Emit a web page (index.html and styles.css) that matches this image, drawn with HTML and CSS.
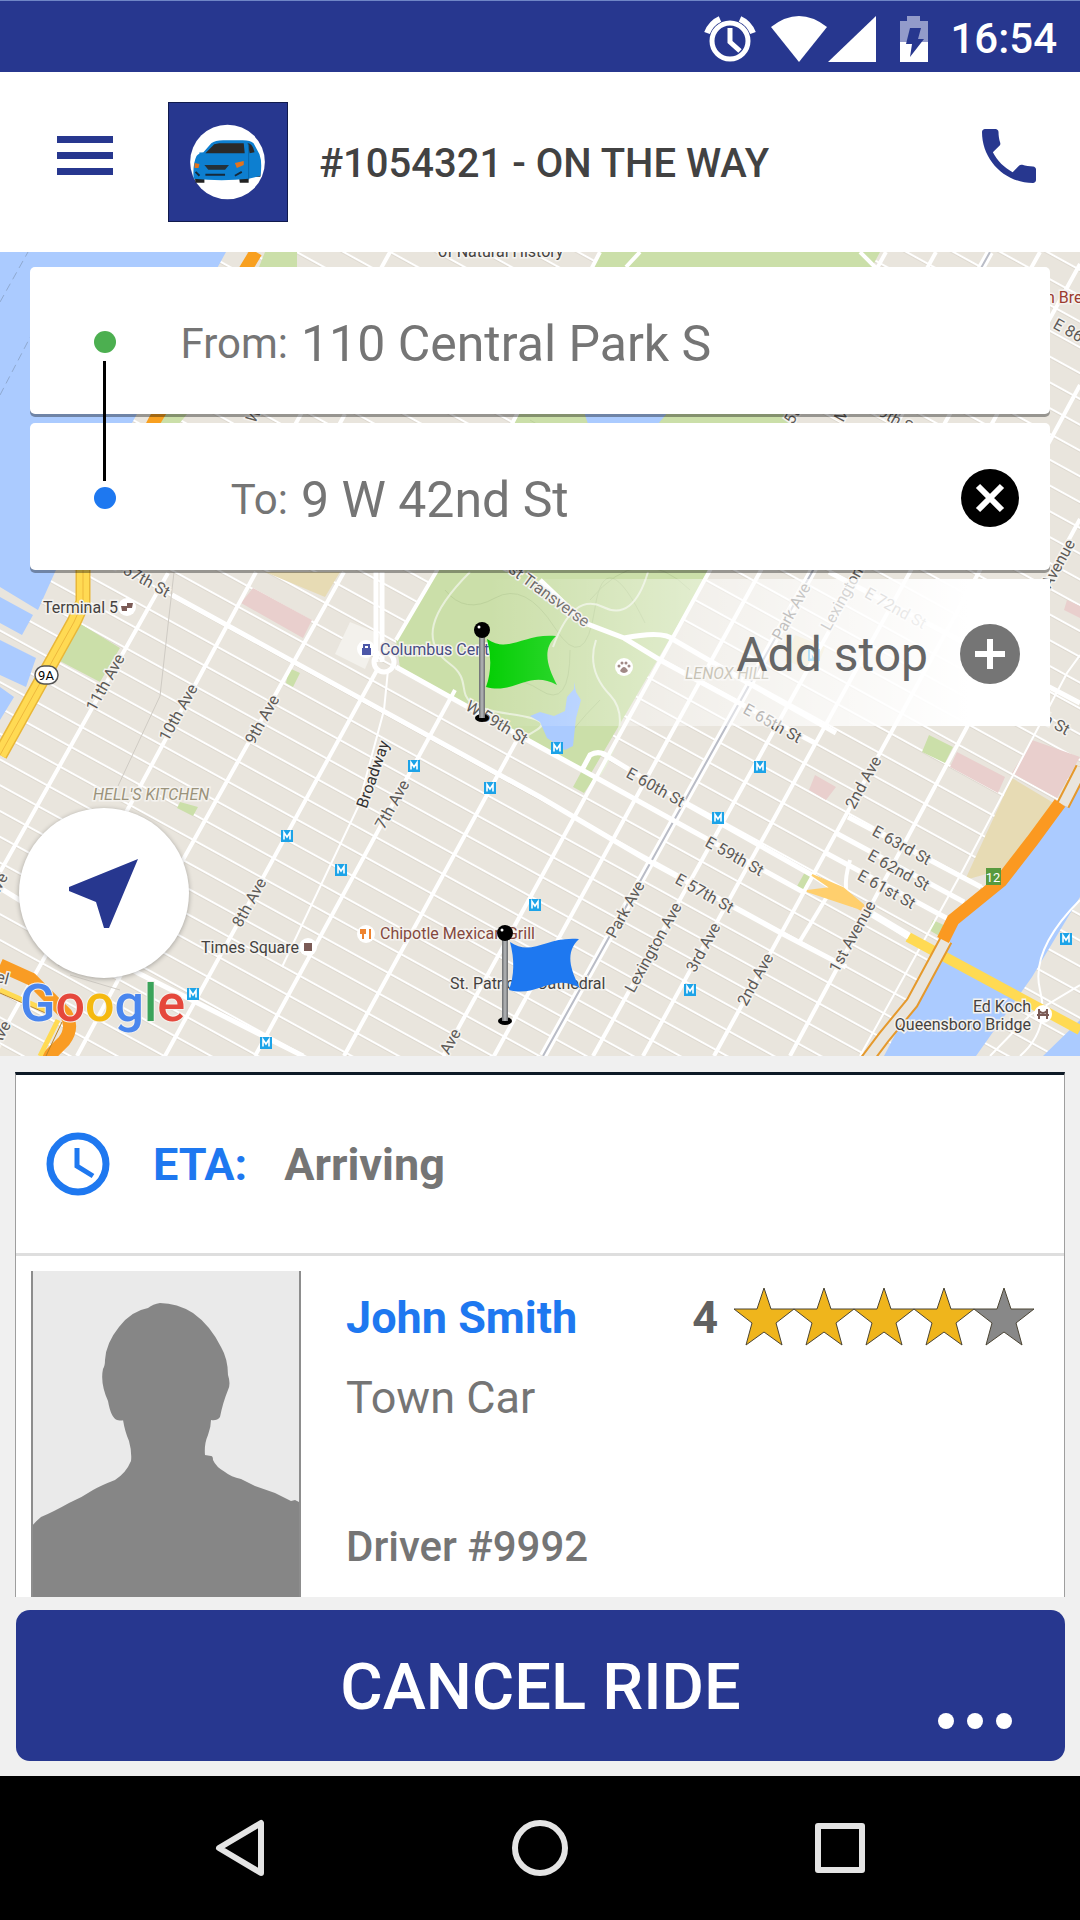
FILE: index.html
```html
<!DOCTYPE html>
<html lang="en">

<head>
    <meta charset="utf-8">
    <title>On the way</title>
    <meta name="viewport" content="width=device-width">
    <link rel="stylesheet" href="styles.css">
</head>

<body>
    <div class="status-bar">
        <svg class="status-alarm" width="52" height="46" viewBox="0 0 52 46" fill="none" stroke="#fff">
            <circle cx="26" cy="25" r="18" stroke-width="5" />
            <path d="M26 12v14l10 9" stroke-width="5" />
            <path d="M3 17Q7 7 16 3M49 17Q45 7 36 3" stroke-width="6" />
        </svg>
        <svg width="58" height="46" viewBox="0 0 58 46" fill="#fff">
            <path d="M29 46L1 11Q29-11 57 11z" />
        </svg>
        <svg width="48" height="46" viewBox="0 0 48 46" fill="#fff">
            <path d="M48 0v46H0z" />
        </svg>
        <svg class="status-battery" width="28" height="46" viewBox="0 0 28 46">
            <path d="M0 5h7V0h13v5h8v21H0z" fill="#939bca" />
            <path d="M0 26h28v20H0z" fill="#fff" />
            <path d="M10 12h11l-3 11h6L10 41l2-13H6z" fill="#27378f" />
        </svg>
        <span>16:54</span>
    </div>

    <header class="header">
        <button class="icon-button menu-button" aria-label="Menu">
            <svg width="56" height="40" viewBox="0 0 56 40" fill="#27378f">
                <path d="M0 0h56v7H0zM0 16h56v7H0zM0 32h56v7H0z" />
            </svg>
        </button>
        <svg class="logo" viewBox="168 102 120 120">
            <circle cx="227.500" cy="162" r="38" fill="#fff" />
            <path d="M194 176h10v7h-9zM239 176h10v7h-9zM254 170h7v7h-6z" fill="#222" />
            <path d="M196 156q2-3 7-4l8-9q4-3 12-3h20q8 0 11 3l6 11q3 8 1 22l-12 3q-27 3-56 0-1-15 3-23z" fill="#0d7fd0" />
            <path d="M199 152l5 1v3l-5-1z" fill="#0d7fd0" />
            <path d="M205 153l9-9 5-1h25l1 10zM248 143q5 0 7 9l-5 1z" fill="#2a2a2a" />
            <path d="M249 144v36" stroke="#0765a8" />
            <path d="M204 165h25l-4 5h-17z" fill="#24313a" />
            <path d="M194 163l5 1-1 4h-4zM235 163l9-2v4l-7 3z" fill="#e3731c" />
            <path d="M195 172l4 4M235 176l7-4M205 175h20" stroke="#16293a" stroke-width="2" />
        </svg>
        <h1>#1054321 - ON THE WAY</h1>
        <button class="icon-button call-button" aria-label="Call driver">
            <svg width="72" height="72" viewBox="0 0 24 24" fill="#27378f">
                <path d="M6.620 10.790c1.440 2.830 3.760 5.140 6.590 6.590l2.200-2.200c.27-.27.67-.36 1.020-.24 1.120.37 2.330.57 3.570.57.550 0 1 .45 1 1V20c0 .55-.45 1-1 1-9.390 0-17-7.610-17-17 0-.55.450-1 1-1h3.500c.55 0 1 .45 1 1 0 1.250.2 2.450.57 3.570.110.350.030.740-.25 1.020l-2.200 2.200z" />
            </svg>
        </button>
    </header>

    <main>
        <section class="map">
            <svg class="map-canvas" viewBox="0 252 1080 804" preserveAspectRatio="xMidYMin slice">
                <defs>
                    <pattern id="streets" width="88" height="22.600" patternUnits="userSpaceOnUse" patternTransform="translate(172 595) rotate(28.800)">
                        <path d="M0 2h88" stroke="#d3cec4" />
                        <path d="M0 1h88" stroke="#fff" stroke-width="2" />
                    </pattern>
                    <symbol id="metro" viewBox="0 0 12 12">
                        <path d="M0 0h12v12H0z" fill="#1ca3e8" />
                        <path d="M3 9.500v-7l3 4.500 3-4.500v7" fill="none" stroke="#fff" stroke-width="1.600" />
                    </symbol>
                    <symbol id="flag" viewBox="0 0 88 104">
                        <ellipse cx="10" cy="97" rx="7" ry="4" />
                        <path d="M10 14v83" stroke="#77797b" stroke-width="6" />
                        <path d="M10 14v83" stroke="#a9abad" stroke-width="3" />
                        <path d="M15 18c22 15 36-6 69-3-14 13-9 30 1 49-28-16-42 10-71 2q8-22 1-48z" fill="currentColor" />
                        <circle cx="10" cy="9" r="8" />
                        <circle cx="7" cy="6" r="1.500" fill="#fff" />
                    </symbol>
                </defs>

                <path d="M0 252h1080v804H0z" fill="#e9e5dd" />
                <path d="M0 252h1080v804H0z" fill="url(#streets)" />

                <!-- parks -->
                <g fill="#cbdfa9">
                    <path d="M600 252L518 414 436 572 396 640l4 28 140 79 50 28L709 572 789 423 880 252z" />
                    <path d="M265 252h32v15h-38zM165 414h22l-8 10h-20zM79 623l41 25-20 34-42-22zM289 668l11 5-7 14-7-4zM929 735l24 12-8 16-23-11zM805 872l7 6-8 15-8-5zM933 920l17 8-9 9-12-7zM585 765l10 12-11 16-11-6zM180 802l18 5-5 9-16-8z" />
                </g>
                <g fill="none" stroke="#bdd29c">
                    <path d="M445 590q20 25 50 8t60 30 40-20 50 15M480 690q30-20 60 0t30-40M600 700q-30 30-40 50M530 420q60 40 90 0M590 600q50-60 100-10" />
                </g>
                <g fill="none" stroke="#e8f0da" stroke-width="2">
                    <path d="M470 572c-40 40-50 70-20 92s-10 40 60 50 0 20 15 30M648 572q-15 50-45 35t-50 40M596 640q-10 30 14 55t-10 80" />
                </g>

                <!-- blocks -->
                <g fill="#e9cfcd">
                    <path d="M253 588l59 32-9 18-62-35zM957 752l48 25-7 16-48-26zM1032 740l48 17-23 41-45-25zM815 775l21 12-10 13-17-10zM1067 600l13 6v12l-16-8z" />
                </g>
                <path d="M1012 778l45 27-56 65-36 10zM265 572h75l-15 25zM795 635l30 12-10 25-30-12z" fill="#e7dbb4" />
                <path d="M350 622l30 12-15 35-30-15z" fill="#f3f1ec" />

                <!-- water -->
                <g fill="#abcbff">
                    <path d="M0 252h226l-94 171-77 149-17 38-38-23zM0 597l33 18-11 20-22-12zM0 640l36 18-10 29-26-12zM0 687l14 10-14 23zM1080 785l-17 20-62 78-51 47-66 126h92l56-79 48-80zM1043 1056l37-36v36z" />
                    <path d="M574 682l2 10 5 8-5 18-3 28-8 4-18-12-7-16-10-6 10-4 14 4 11-5 2-14 7-8zM584 412h84l-10 12h-70z" />
                </g>
                <path d="M0 302l28-50M0 395L60 280" stroke="#8fa9d0" stroke-dasharray="8 5" />

                <!-- avenues and wide streets -->
                <g fill="none" stroke="#fff" stroke-width="4">
                    <path d="M168 573L0 872M256 572L129 807 0 1037M344 572L184 858 77 1056M377 670L165 1056M396 640L436 572 600 252" />
                    <path d="M455 690L255 1056M517 740L344 1056M886 252L709 572 443 1056M936 252L760 572 494 1056" />
                    <path d="M1040 252L862 572 593 1056M1080 264L910 572 643 1056M1080 385L979 572 714 1056M1080 519L967 727 790 1056" />
                    <path d="M390 252L262 485M345 414l-60 110M640 252l-14 15M860 252l20 20" />
                    <path d="M850 860q-10 34 4 46M828 895l-28 46" />
                </g>
                <path d="M990 252L812 572 543 1056" stroke="#fff" stroke-width="8" fill="none" />
                <path d="M990 252L812 572 543 1056" stroke="#b9bcc6" stroke-width="2" fill="none" />
                <g fill="none" stroke="#fff" stroke-width="5">
                    <path d="M172 595L540 797l107 63 134 73 65 34M396 667L540 747l55 30 83 46 127 70M582 770l8-15q10-6 20 3l78 47 124 70 96 62" />
                    <path d="M540 580l45 43 39 15 36 22 83 45 72 38M624 638q40-8 50 2l69 40 93 53M829 572l251 131M0 888l138 85 165 83M848 817l133 70M836 833l128 69M826 853l124 67" />
                    <path d="M376 572v90M382 572v90" />
                    <circle cx="384" cy="662" r="10" />
                </g>
                <path d="M1080 655l-13 18-104 197-103 186M388 670l-4 40-26 97-76 160M1080 985l-50 30-40 41M1080 900q-50 50-40 90t-20 66" fill="none" stroke="#fff" stroke-width="2" />
                <path d="M174 572l-14 124-42 90M98 975l-40-10M120 990l-50-15" fill="none" stroke="#cfcbc4" />

                <!-- highways -->
                <g fill="none">
                    <path d="M908 937l172 93" stroke="#ffda53" stroke-width="10" />
                    <path d="M812 875l31 13 26 22 11 10-22-12-51-17 24-3z" fill="#ffcf6d" stroke="#ffcf6d" stroke-width="2" />
                    <path d="M872 914l37 22" stroke="#fff" stroke-width="7" />
                    <path d="M256 252L155 420 82 560" stroke="#f8a020" stroke-width="13" />
                    <path d="M83 565v37l-9 20L0 755" stroke="#e9b738" stroke-width="15" />
                    <path d="M83 565v37l-9 20L0 755" stroke="#ffda53" stroke-width="12" />
                    <path d="M83 565v37l-9 20L0 755" stroke="#eeb83d" />
                    <path d="M1082 768l-19 37M946 940l-34 63-28 34-18 24" stroke="#e5992c" stroke-width="14" />
                    <path d="M1082 768l-19 37M946 940l-34 63-28 34-18 24" stroke="#e9e5dd" stroke-width="10" />
                    <path d="M1060 803l-28 38-31 40-48 39-10 20" stroke="#fb9921" stroke-width="13" />
                    <path d="M0 965l31 14 35 35q8 14-2 27l-18 18" stroke="#f99c24" stroke-width="13" />
                    <path d="M0 990l50 22M58 1020l-18 36" stroke="#ffda53" stroke-width="5" />
                </g>
                <path d="M0 993l50 22M62 1022l-16 34" stroke="#b98228" />

                <!-- place markers -->
                <g fill="#fff">
                    <circle cx="127" cy="607" r="9" />
                    <circle cx="366" cy="649" r="9" />
                    <circle cx="366" cy="934" r="9" />
                    <circle cx="308" cy="947" r="9" />
                    <circle cx="624" cy="667" r="9" />
                    <circle cx="1043" cy="1014" r="9" />
                </g>
                <path d="M121 606h6v5h-5zM127 603h6l-1 5h-5zM304 943h8v8h-8z" fill="#7b5b56" />
                <path d="M362 648h9v7h-9z" fill="#4c57a8" />
                <path d="M364 648v-3h5v3" fill="none" stroke="#4c57a8" stroke-width="2" />
                <path d="M363 929v10M361 929v4h4v-4M370 929v10" fill="none" stroke="#ee8430" stroke-width="2" />
                <g fill="#7b5b56">
                    <path d="M620 671q4-8 8 0-4 4-8 0z" />
                    <circle cx="619" cy="666" r="1.500" />
                    <circle cx="622" cy="663" r="1.500" />
                    <circle cx="626" cy="663" r="1.500" />
                    <circle cx="629" cy="666" r="1.500" />
                </g>
                <path d="M1039 1009v10M1047 1009v10M1037 1015h12M1039 1011q4 4 8 0" fill="none" stroke="#7b5b56" stroke-width="2" />
                <use href="#metro" x="408" y="760" width="12" height="12" />
                <use href="#metro" x="484" y="782" width="12" height="12" />
                <use href="#metro" x="281" y="830" width="12" height="12" />
                <use href="#metro" x="335" y="864" width="12" height="12" />
                <use href="#metro" x="187" y="988" width="12" height="12" />
                <use href="#metro" x="260" y="1037" width="12" height="12" />
                <use href="#metro" x="529" y="899" width="12" height="12" />
                <use href="#metro" x="551" y="742" width="12" height="12" />
                <use href="#metro" x="754" y="761" width="12" height="12" />
                <use href="#metro" x="712" y="812" width="12" height="12" />
                <use href="#metro" x="684" y="984" width="12" height="12" />
                <use href="#metro" x="1060" y="933" width="12" height="12" />
                <use href="#metro" x="808" y="649" width="12" height="12" />

                <!-- street names -->
                <g class="street">
                    <text transform="translate(110 685) rotate(-61)">11th Ave</text>
                    <text transform="translate(183 715) rotate(-61)">10th Ave</text>
                    <text transform="translate(267 722) rotate(-61)">9th Ave</text>
                    <text class="dark" transform="translate(378 776) rotate(-71)">Broadway</text>
                    <text transform="translate(397 807) rotate(-61)">7th Ave</text>
                    <text transform="translate(254 905) rotate(-61)">8th Ave</text>
                    <text transform="translate(455 1044) rotate(-61)">Ave</text>
                    <text transform="translate(2 888) rotate(-61)">Ave</text>
                    <text transform="translate(5 1036) rotate(-61)">Ave</text>
                    <text transform="translate(-3 982) rotate(15)">nel</text>
                    <text transform="translate(136 581) rotate(29)">W 57th St</text>
                    <text transform="translate(494 727) rotate(31)">W 59th St</text>
                    <text transform="translate(537 593) rotate(36)">West Transverse</text>
                    <text transform="translate(630 912) rotate(-61)">Park Ave</text>
                    <text transform="translate(658 950) rotate(-61)">Lexington Ave</text>
                    <text transform="translate(708 950) rotate(-61)">3rd Ave</text>
                    <text transform="translate(760 982) rotate(-61)">2nd Ave</text>
                    <text transform="translate(857 939) rotate(-61)">1st Avenue</text>
                    <text transform="translate(868 785) rotate(-61)">2nd Ave</text>
                    <text transform="translate(653 792) rotate(29)">E 60th St</text>
                    <text transform="translate(732 861) rotate(29)">E 59th St</text>
                    <text transform="translate(702 898) rotate(29)">E 57th St</text>
                    <text transform="translate(770 728) rotate(29)">E 65th St</text>
                    <text transform="translate(899 850) rotate(29)">E 63rd St</text>
                    <text transform="translate(896 875) rotate(29)">E 62nd St</text>
                    <text transform="translate(884 894) rotate(29)">E 61st St</text>
                    <text transform="translate(796 614) rotate(-61)">Park Ave</text>
                    <text transform="translate(854 588) rotate(-61)">Lexington Ave</text>
                    <text transform="translate(893 613) rotate(29)">E 72nd St</text>
                    <text transform="translate(1080 343) rotate(29)">E 86th St</text>
                    <text transform="translate(1063 566) rotate(-61)">Avenue</text>
                    <text transform="translate(1038 720) rotate(29)">E 70th St</text>
                    <text transform="translate(806 402) rotate(-61)">5th Ave</text>
                    <text transform="translate(858 396) rotate(-61)">Madison</text>
                    <text transform="translate(886 420) rotate(29)">E 79th St</text>
                    <text transform="translate(268 400) rotate(-61)">West St</text>
                </g>
                <g class="place">
                    <text x="43" y="613">Terminal 5</text>
                    <text x="201" y="953">Times Square</text>
                    <text x="450" y="989">St. Patrick's Cathedral</text>
                    <text x="438" y="257">of Natural History</text>
                    <text x="380" y="655" fill="#484e83">Columbus Center</text>
                    <text x="380" y="939" fill="#84493e">Chipotle Mexican Grill</text>
                    <text x="1046" y="303" fill="#9b3b2e">n Bread</text>
                    <text x="1031" y="1012" text-anchor="end">Ed Koch</text>
                    <text x="1031" y="1030" text-anchor="end">Queensboro Bridge</text>
                    <text class="district" x="93" y="800">HELL'S KITCHEN</text>
                    <text class="district" x="685" y="679">LENOX HILL</text>
                </g>
                <rect x="35" y="666" width="23" height="18" rx="9" fill="#fff" stroke="#555" stroke-width="1.500" />
                <text class="badge" x="46" y="680">9A</text>
                <path d="M986 868h15v17h-15z" fill="#589a3e" />
                <text class="badge" x="993" y="882" fill="#fff">12</text>

                <use class="pickup" href="#flag" x="472" y="621" width="88" height="104" />
                <use class="dropoff" href="#flag" x="495" y="924" width="88" height="104" />

                <text class="google" x="20" y="1021"><tspan fill="#4a86ee">G</tspan><tspan fill="#e5483c">o</tspan><tspan fill="#f5b910">o</tspan><tspan fill="#4a86ee">g</tspan><tspan fill="#3ba35a">l</tspan><tspan fill="#e5483c">e</tspan></text>
            </svg>

            <form class="route">
                <div class="stop from">
                    <span class="dot"></span>
                    <label for="from">From:</label>
                    <input id="from" type="text" value="110 Central Park S">
                </div>
                <div class="stop to">
                    <span class="dot"></span>
                    <label for="to">To:</label>
                    <input id="to" type="text" value="9 W 42nd St">
                    <button type="button" class="icon-button" aria-label="Clear destination">
                        <svg width="60" height="60" viewBox="0 0 60 60">
                            <circle cx="30" cy="30" r="29" />
                            <path d="M18 18l24 24M42 18L18 42" stroke="#fff" stroke-width="6" />
                        </svg>
                    </button>
                </div>
                <button type="button" class="stop add-stop">
                    Add stop
                    <svg width="60" height="60" viewBox="0 0 60 60">
                        <circle cx="30" cy="30" r="30" fill="#757575" />
                        <path d="M15 30h30M30 15v30" stroke="#fff" stroke-width="6" />
                    </svg>
                </button>
            </form>

            <button class="locate" aria-label="My location">
                <svg width="70" height="70" viewBox="0 0 70 70" fill="#27378f">
                    <path d="M69 1L40 70h-5L27 44 0 33v-4z" />
                </svg>
            </button>
        </section>

        <section class="ride">
            <div class="eta">
                <svg width="64" height="64" viewBox="0 0 64 64" fill="none" stroke="#1e78f0">
                    <circle cx="32" cy="32" r="28" stroke-width="7" />
                    <path d="M31 16v18l16 10" stroke-width="5" />
                </svg>
                <strong class="eta-label">ETA:</strong>
                <strong>Arriving</strong>
            </div>
            <div class="driver">
                <svg class="photo" viewBox="0 0 270 326" preserveAspectRatio="xMidYMin slice">
                    <path d="M0 0h270v326H0z" fill="#eaeaea" />
                    <path d="M129 32q-7 1-12 5-17 3-29 19-13 16-14 33 0 6-2 9-3 14 5 32 3 17 9 19 6 1 6 0 2 12 6 21 3 11 2 20-5 12-16 19-13 5-22 10-12 8-24 13-16 9-28 14-5 4-10 10v70h270v-94l-6-3-4 1-16-8-20-7-14-7q-10-2-16-7-9-5-12-12 0-4-2-4l-6-1q-1-11 3-20 3-8 3-15 6 1 9-3 3-15 8-27 3-6 0-15 0-16-7-28-11-22-28-34-16-10-33-10z" fill="#868686" />
                    <path d="M1 0v326M269 0v326" stroke="#8d8d8d" stroke-width="2" />
                </svg>
                <div class="driver-info">
                    <div class="driver-head">
                        <h2>John Smith</h2>
                        <span class="score">4</span>
                        <svg class="stars" width="300" height="58" viewBox="0 0 300 58">
                            <defs>
                                <path id="star" d="M30 0l7 21h23L42 35l6 22-18-13-18 13 6-22L0 21h23z" stroke="#4b4535" />
                            </defs>
                            <g fill="#efb51c">
                                <use href="#star" />
                                <use href="#star" x="60" />
                                <use href="#star" x="120" />
                                <use href="#star" x="180" />
                            </g>
                            <use href="#star" x="240" fill="#888" />
                        </svg>
                    </div>
                    <p class="car-type">Town Car</p>
                    <p class="driver-number">Driver #9992</p>
                </div>
            </div>
        </section>

        <div class="actions">
            <button class="cancel">CANCEL RIDE</button>
            <button class="icon-button more" aria-label="More options">
                <svg width="76" height="18" viewBox="0 0 76 18" fill="#fff">
                    <circle cx="9" cy="9" r="8" />
                    <circle cx="38" cy="9" r="8" />
                    <circle cx="67" cy="9" r="8" />
                </svg>
            </button>
        </div>
    </main>

    <nav class="nav-bar">
        <button class="icon-button" aria-label="Back">
            <svg width="60" height="60" viewBox="0 0 60 60">
                <path d="M51 5v50L9 30z" />
            </svg>
        </button>
        <button class="icon-button" aria-label="Home">
            <svg width="60" height="60" viewBox="0 0 60 60">
                <circle cx="30" cy="30" r="25" />
            </svg>
        </button>
        <button class="icon-button" aria-label="Recent apps">
            <svg width="60" height="60" viewBox="0 0 60 60">
                <path d="M8 8h44v44H8z" />
            </svg>
        </button>
    </nav>
</body>

</html>
```

FILE: styles.css
```css
* {
    box-sizing: border-box;
}

body {
    margin: 0;
    min-height: 100vh;
    display: flex;
    flex-direction: column;
    background-color: #f0f0f0;
    color: #757575;
    font-family: Roboto, sans-serif;
    font-size: 45px;
}

h1,
h2,
p {
    margin: 0;
}

svg {
    display: block;
    flex: none;
}

button,
input {
    border: none;
    padding: 0;
    background: none;
    color: inherit;
    font-family: inherit;
    font-size: inherit;
}

.status-bar {
    display: flex;
    align-items: center;
    justify-content: flex-end;
    height: 72px;
    padding: 4px 23px 0 0;
    border-top: 1px solid #6f86c6;
    background-color: #27378f;
    color: #fff;
    font-size: 42px;
    font-weight: 500;
}

.status-alarm {
    margin-right: 14px;
}

.status-battery {
    margin: 0 22px 0 24px;
}

.header {
    display: flex;
    align-items: center;
    height: 180px;
    padding: 0 35px 0 57px;
    background-color: #fff;
}

.menu-button,
.call-button {
    margin-bottom: 12px;
}

.logo {
    width: 120px;
    height: 120px;
    margin: 0 31px 0 55px;
    border: 1px solid #101a4d;
    background-color: #27378f;
}

.header h1 {
    flex: 1;
    padding-top: 2px;
    color: #424242;
    font-size: 40px;
    font-weight: 500;
}

main {
    flex: 1;
    display: flex;
    flex-direction: column;
}

.map {
    position: relative;
    height: 804px;
    padding: 15px 30px;
    overflow: hidden;
}

.map-canvas {
    position: absolute;
    top: 0;
    left: 0;
    width: 100%;
    height: 100%;
}

.map-canvas text {
    font-size: 16px;
    paint-order: stroke;
    stroke: #f4f2ee;
    stroke-width: 3px;
}

.street {
    fill: #5d5a57;
    text-anchor: middle;
}

.place {
    fill: #45423f;
}

.dark {
    fill: #333;
}

.district {
    fill: #9b937b;
    font-style: italic;
}

.map-canvas .badge {
    font-size: 13px;
    text-anchor: middle;
    stroke: none;
}

.map-canvas .google {
    font-size: 52px;
    font-weight: 500;
    stroke-width: 2px;
}

.pickup {
    color: #06cf06;
}

.dropoff {
    color: #1e78f0;
}

.route {
    position: relative;
    display: flex;
    flex-direction: column;
    gap: 9px;
}

.stop {
    display: flex;
    align-items: center;
    height: 147px;
    padding: 3px 30px 0 64px;
    border-radius: 5px;
    background-color: #fff;
    box-shadow: 0 3px 0 rgba(0, 0, 0, .35);
}

.dot {
    flex: none;
    width: 22px;
    height: 22px;
    border-radius: 50%;
    background-color: #4caf50;
}

.to .dot {
    background-color: #1e78f0;
}

/* line that joins the two dots */
.route::before {
    content: "";
    position: absolute;
    top: 94px;
    left: 73px;
    width: 3px;
    height: 120px;
    background-color: #000;
}

.stop label {
    width: 172px;
    margin-right: 13px;
    padding-top: 2px;
    text-align: right;
    font-size: 42px;
}

.stop input {
    flex: 1;
    min-width: 0;
    padding-top: 4px;
    font-size: 50px;
}

.add-stop {
    justify-content: flex-end;
    gap: 32px;
    border-radius: 0;
    background-image: linear-gradient(to right, rgba(255, 255, 255, 0) 45%, #fff 92%);
    background-color: transparent;
    box-shadow: none;
    color: #666;
    font-size: 48px;
}

.locate {
    position: absolute;
    left: 19px;
    bottom: 78px;
    display: flex;
    align-items: center;
    justify-content: center;
    width: 170px;
    height: 170px;
    border-radius: 50%;
    background-color: #fff;
    box-shadow: 0 1px 5px rgba(0, 0, 0, .3);
}

.ride {
    flex: 1;
    display: flex;
    flex-direction: column;
    margin: 16px 15px 0;
    border: 1px solid #9e9e9e;
    border-top: 3px solid #0e1a26;
    border-bottom: none;
    background-color: #fff;
}

.eta {
    display: flex;
    align-items: center;
    height: 181px;
    padding-left: 30px;
    border-bottom: 3px solid #dedede;
}

.eta-label {
    margin: 0 37px 0 43px;
    color: #1e78f0;
}

.driver {
    flex: 1;
    display: flex;
    gap: 45px;
    padding: 15px 30px 0 15px;
}

.photo {
    width: 270px;
    height: 326px;
}

.driver-info {
    flex: 1;
    display: flex;
    flex-direction: column;
    padding: 17px 0 14px;
}

.driver-head {
    display: flex;
    align-items: center;
    font-weight: 700;
}

.driver-head h2 {
    flex: 1;
    color: #1e78f0;
    font-size: 45px;
}

.score {
    margin-right: 16px;
    color: #616161;
}

.car-type {
    margin-top: 25px;
}

.driver-number {
    margin-top: auto;
    padding-bottom: 12px;
    font-size: 42px;
    font-weight: 500;
}

.actions {
    position: relative;
    padding: 13px 15px 15px 16px;
}

.cancel {
    width: 100%;
    height: 151px;
    padding-top: 3px;
    border-radius: 14px;
    background-color: #27378f;
    color: #fff;
    font-size: 65px;
    font-weight: 500;
}

.more {
    position: absolute;
    right: 67px;
    bottom: 46px;
}

.nav-bar {
    display: flex;
    align-items: center;
    justify-content: space-between;
    height: 144px;
    padding: 0 210px;
    background-color: #000;
}

.nav-bar svg {
    fill: none;
    stroke: #e4e4e4;
    stroke-width: 6px;
    stroke-linejoin: round;
}
```
